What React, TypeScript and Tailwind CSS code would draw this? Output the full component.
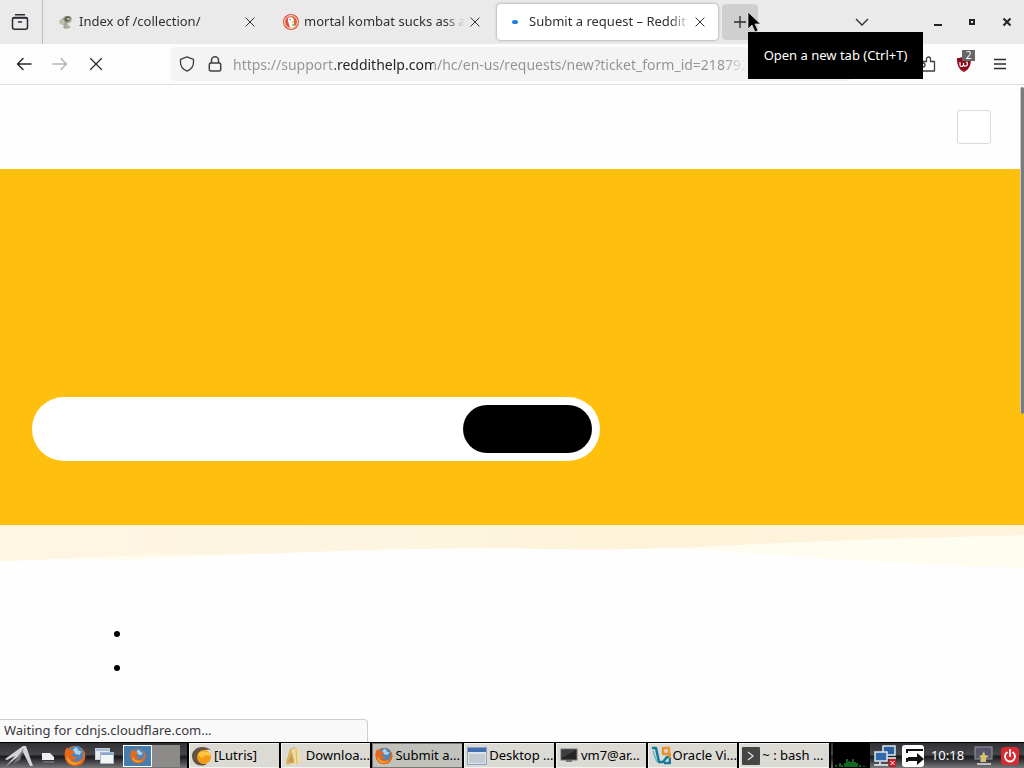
import type { ReactNode } from "react";

function Cross({ size = 16, className = "" }: { size?: number; className?: string }) {
  return (
    <svg width={size} height={size} viewBox="0 0 16 16" fill="none" stroke="currentColor" strokeWidth="1.3" strokeLinecap="round" className={className} aria-hidden="true">
      <path d="M2.5 2.5l11 11M13.5 2.5l-11 11" />
    </svg>
  );
}

function RecentIcon() {
  return (
    <svg width="18" height="18" viewBox="0 0 18 18" fill="none" stroke="#2b2a33" strokeWidth="1.5" strokeLinecap="round" aria-hidden="true">
      <path d="M4.5 1.7h9" />
      <rect x="1.5" y="4.6" width="15" height="11.6" rx="2" />
      <path d="M2 4.9h14M7.5 9h3" />
    </svg>
  );
}

function CollectionIcon() {
  return (
    <svg width="16" height="16" viewBox="0 0 16 16" aria-hidden="true">
      <path d="M1 7l4-3 2-2h5l2 2-1 4-4 2 3 2v2l-5 1-2-2 1-2-4-1z" fill="#a5a698" />
      <path d="M6 5l3-3 3 1-1 4-3 1z" fill="#5f6356" />
      <path d="M2 7l3-1 1 3-3 1zM8 12h4" fill="#bdb49c" stroke="#c9c6ba" strokeWidth="1" />
      <circle cx="10" cy="5" r="1" fill="#d9d6c4" />
    </svg>
  );
}

function DuckIcon() {
  return (
    <svg width="16" height="16" viewBox="0 0 16 16" aria-hidden="true">
      <circle cx="8" cy="8" r="8" fill="#dc5636" />
      <circle cx="8" cy="8" r="6.4" fill="none" stroke="#fff" strokeWidth="0.9" />
      <path d="M5 4.6C5.700 2.800 9.600 2.600 10.700 5.300c.5 1.6-.2 2.500.3 4 .4 1.300 1.100 2.700.6 3.800-1.300.8-3.300 1-4.600.500-.600-2.900-2.700-6.500-2-9z" fill="#fff" />
      <path d="M8.300 7.500c1.500-.500 2.700-.300 4 .100-.900.900-2.300 1.200-3.900.900z" fill="#f5b82e" />
      <circle cx="7" cy="5.700" r=".700" fill="#35506e" />
      <path d="M9 10.500l2.500-.7v2.200L9 11.500z" fill="#62b35b" />
    </svg>
  );
}

function FirefoxIcon({ size = 20 }: { size?: number }) {
  return (
    <svg width={size} height={size} viewBox="0 0 20 20" className="shrink-0" aria-hidden="true">
      <circle cx="10" cy="10" r="9.300" fill="#dd6b18" />
      <circle cx="11" cy="8" r="7" fill="#4a85bd" />
      <path d="M10 2c2 .5 3 1.500 3 3l3 1-2 3-4-1-2-3z" fill="#a9d3ea" />
      <path d="M1 5l2-3 2 3c2-1 4 0 5 2L7 8.500c0 2 2 3 5 2-1 3-4 4-6 2 2 4 9 4 11-1 1-3 0-6-1-8 3 2 4 6 3 9-2 6-8 8-13 5C1 15 0 10 1 5z" fill="#e8681a" />
      <path d="M3 10c2 6 8 8 13 4-3 5-9 5-12 1-1-1-1-3-1-5z" fill="#f7a531" />
    </svg>
  );
}

function WindowsIcon() {
  return (
    <svg width="22" height="20" viewBox="0 0 22 20" aria-hidden="true">
      <rect x="1.500" y="2.500" width="14" height="11" fill="#e8eaee" stroke="#c5ccda" />
      <path d="M2 3h13v2H2z" fill="#a8bdde" />
      <rect x="6.500" y="6.500" width="13" height="11" fill="#f4f5f7" stroke="#a9b4cd" />
      <path d="M7 7h12v2H7z" fill="#8ba5d1" />
    </svg>
  );
}

function Tab({ icon, title, active = false, className }: { icon: ReactNode; title: string; active?: boolean; className: string }) {
  return (
    <div
      role="tab"
      aria-selected={active}
      className={`flex h-9 items-center rounded pr-2 pl-[11px] ${active ? "bg-white shadow-[0_0_3px_rgba(0,0,0,0.4)]" : ""} ${className}`}
    >
      <span className="flex w-4 shrink-0 justify-center">{icon}</span>
      <span className="ml-[5px] min-w-0 flex-1 overflow-hidden text-[13px] whitespace-nowrap text-[#2f2f35] [mask-image:linear-gradient(to_left,transparent,black_20px)]">{title}</span>
      <button aria-label={`Close ${title}`} className="flex size-5 shrink-0 items-center justify-center text-[#2b2a33]">
        <Cross size={12} />
      </button>
    </div>
  );
}

function TabBar() {
  return (
    <div className="flex h-11 shrink-0 items-center bg-[#eaeaea]">
      <button aria-label="Recent browsing" className="flex h-11 w-[43px] shrink-0 items-center justify-center border-r border-[#bdbdbd] pr-0.5">
        <RecentIcon />
      </button>
      <div role="tablist" className="ml-1 flex min-w-0 gap-1">
        <Tab className="w-[221px]" icon={<CollectionIcon />} title="Index of /collection/" />
        <Tab className="w-[221px]" icon={<DuckIcon />} title="mortal kombat sucks ass a" />
        <Tab
          active
          className="w-[221px]"
          icon={<svg width="16" height="16" aria-hidden="true"><ellipse cx="7" cy="8" rx="3" ry="2" fill="#1a7be0" /></svg>}
          title="Submit a request – Reddit"
        />
      </div>
      <div className="relative ml-1 shrink-0">
        <button aria-label="Open a new tab" className="flex h-9 w-9 items-center justify-center rounded bg-[#cfcfcf]">
          <svg width="14" height="14" viewBox="0 0 14 14" stroke="#2b2a33" strokeWidth="1.3" aria-hidden="true"><path d="M7 1v12M1 7h12" /></svg>
        </button>
        <div role="tooltip" className="absolute top-7 left-[26px] z-20 flex h-[47px] w-[175px] items-center justify-center bg-black text-[13px] whitespace-nowrap text-white">
          Open a new tab (Ctrl+T)
        </div>
        <svg width="14" height="22" viewBox="0 0 14 22" className="absolute top-[7px] left-[25px] z-30" aria-hidden="true">
          <path d="M1 1v17l4-4 3 7 3-1.500-3-6.500h5.500z" fill="#000" stroke="#eee" strokeWidth="0.7" />
        </svg>
      </div>
      <div className="flex-1" />
      <button aria-label="List all tabs" className="mr-16 flex size-4 items-center justify-center">
        <svg width="14" height="8" viewBox="0 0 14 8" fill="none" stroke="#2b2a33" strokeWidth="1.300" aria-hidden="true"><path d="M1 1l6 6 6-6" /></svg>
      </button>
      <div className="flex shrink-0 gap-[26px] pr-3">
        <button aria-label="Minimize"><svg width="8" height="10" aria-hidden="true"><path d="M0 8h8" stroke="#222" strokeWidth="2" /></svg></button>
        <button aria-label="Maximize"><svg width="8" height="10" aria-hidden="true"><rect x="2" y="3" width="4" height="4" fill="none" stroke="#222" strokeWidth="2" /></svg></button>
        <button aria-label="Close window"><svg width="10" height="10" aria-hidden="true"><path d="M1.500 1.500l7 7M8.500 1.500l-7 7" stroke="#222" strokeWidth="2" /></svg></button>
      </div>
    </div>
  );
}

function Toolbar() {
  return (
    <div className="flex h-[41px] shrink-0 items-center border-b border-[#e0e0e0] bg-[#fdfdfd] pr-4 pl-4">
      <button aria-label="Back" className="flex size-4 items-center justify-center">
        <svg width="16" height="16" viewBox="0 0 16 16" fill="none" stroke="#2b2a33" strokeWidth="1.5" strokeLinecap="round" strokeLinejoin="round" aria-hidden="true"><path d="M7 2.500L1.500 8 7 13.500M2 8h13" /></svg>
      </button>
      <button aria-label="Forward" className="ml-5 flex size-4 items-center justify-center">
        <svg width="16" height="16" viewBox="0 0 16 16" fill="none" stroke="#b4b4b6" strokeWidth="1.5" strokeLinecap="round" strokeLinejoin="round" aria-hidden="true"><path d="M9 2.500L14.500 8 9 13.500M14 8H1" /></svg>
      </button>
      <button aria-label="Stop" className="ml-5 flex size-4 items-center justify-center text-[#2b2a33]"><Cross /></button>
      <div className="ml-[67px] flex h-[34px] min-w-0 flex-1 items-center rounded bg-[#f4f4f4] pl-2">
        <svg width="16" height="16" viewBox="0 0 16 16" fill="none" stroke="#3f3f46" strokeWidth="1.300" strokeLinejoin="round" className="shrink-0" aria-hidden="true">
          <path d="M8 .900l6.500 2.400v3.200c0 4-2.500 7-6.500 8.700-4-1.700-6.500-4.700-6.500-8.700V3.300z" />
        </svg>
        <svg width="16" height="16" viewBox="0 0 16 16" fill="none" stroke="#3f3f46" strokeWidth="1.5" className="ml-3 shrink-0" aria-hidden="true">
          <rect x="2.300" y="7" width="11.400" height="8" rx="1.500" /><path d="M4.500 7V4a3.500 3.200 0 017 0v3" />
        </svg>
        <input
          aria-label="Address"
          readOnly
          value="https://support.reddithelp.com/hc/en-us/requests/new?ticket_form_id=2187929"
          className="ml-2.5 w-[514px] min-w-0 bg-[linear-gradient(to_right,#929294_102px,#202024_102px,#202024_201px,#929294_201px,#929294_490px,transparent_514px)] bg-clip-text text-[14px] text-transparent outline-none"
        />
      </div>
      <button aria-label="Extensions" className="ml-[68px] flex size-4 items-center justify-center">
        <svg width="16" height="16" viewBox="0 0 16 16" fill="none" stroke="#3f3f46" strokeWidth="1.300" strokeLinejoin="round" aria-hidden="true">
          <path d="M1.500 5.500h5V3a2 2 0 014 0v2.500h4v9.500h-13v-4H3a2 2 0 000-4H1.500z" />
        </svg>
      </button>
      <button aria-label="Content blocker, 2 blocked" className="relative ml-5 size-4">
        <svg width="16" height="16" viewBox="0 0 16 16" aria-hidden="true">
          <path d="M8 0c2 1.500 4 2 7 2 0 6-1 11-7 14C2 13 1 8 1 2c3 0 5-.500 7-2z" fill="#8f0b1c" />
          <path d="M4 6v3c0 2 3 2 3.500 0V7v2c1 2 4 1 4-1s-1-2-1.500-2" fill="none" stroke="#fff" strokeWidth="1.200" />
        </svg>
        <span className="absolute -top-1.5 left-1.5 h-[11px] w-[13px] bg-[#666] text-center text-[10px] leading-[11px] text-white">2</span>
      </button>
      <button aria-label="Menu" className="ml-5 flex size-4 items-center justify-center">
        <svg width="14" height="12" viewBox="0 0 14 12" stroke="#2b2a33" strokeWidth="1.300" aria-hidden="true"><path d="M1 1.500h12M1 6h12M1 10.500h12" /></svg>
      </button>
    </div>
  );
}

function Page() {
  return (
    <main className="relative min-h-0 flex-1 overflow-hidden bg-[#fefefe]">
      <header className="flex h-[84px] items-center justify-end pr-[33px]">
        <button aria-label="Toggle navigation menu" className="size-[34px] rounded-[3px] border border-[#dadada] bg-white" />
      </header>
      <section className="flex h-[356px] flex-col justify-end bg-[#ffc00d] px-8 pb-16">
        <form className="flex h-16 w-full max-w-[568px] rounded-full bg-white p-2">
          <input type="search" aria-label="Search" className="min-w-0 flex-1 rounded-full pl-6 outline-none" />
          <button type="button" aria-label="Submit search" className="w-[129px] rounded-full bg-black" />
        </form>
      </section>
      <svg viewBox="0 0 1024 48" preserveAspectRatio="none" className="block h-12 w-full" aria-hidden="true">
        <defs>
          <linearGradient id="wave">
            <stop offset="0" stopColor="#fff5e3" />
            <stop offset="0.4" stopColor="#fef5e0" />
            <stop offset="0.6" stopColor="#fdf3d9" />
            <stop offset="1" stopColor="#fff3dc" />
          </linearGradient>
        </defs>
        <path d="M0 0h1024v43Q930 40 850 35T700 25T512 20T250 29T60 34L0 36z" fill="#fffcf0" />
        <path d="M0 0h1024v10Q850 14 740 20Q610 27 512 23Q390 23 260 29Q120 30 60 34L0 36z" fill="url(#wave)" />
      </svg>
      <ul className="mt-[43px] list-disc pl-[132px] text-[16px] leading-[34px] text-black">
        <li className="h-[34px]" />
        <li className="h-[34px]" />
      </ul>
      <div className="absolute top-0.5 right-0 h-[327px] w-1 rounded-sm border-l border-[#c8c8c8] bg-[#7b7b7f]" />
      <div role="status" className="absolute bottom-0 left-0 flex h-[23px] w-[368px] items-center rounded-tr-sm border-t border-r border-[#cfcfcf] bg-[#f9f9fa] pl-1 text-[13px] text-[#38383d]">
        Waiting for cdnjs.cloudflare.com...
      </div>
    </main>
  );
}

function LutrisIcon() {
  return (
    <svg width="20" height="20" viewBox="0 0 20 20" className="shrink-0" aria-hidden="true">
      <path d="M19 4C12-2 0 1 0 10c0 8 8 12 15 8-7 0-10-4-9-8 1-5 7-7 13-6z" fill="#635443" />
      <circle cx="12" cy="11" r="7" fill="#f59a13" />
      <path d="M6 9c2-5 9-4 12-2v3c-4-2-6 0-8 2z" fill="#ffc342" />
    </svg>
  );
}

function FolderIcon() {
  return (
    <svg width="20" height="20" viewBox="0 0 20 20" className="shrink-0" aria-hidden="true">
      <path d="M2 16L6 3l5-2v16l-8 2z" fill="#dcb45f" />
      <path d="M8 3h8l1 15H7z" fill="#f0dda3" />
      <path d="M4 16l4-9 2 10zM12 3l1 15" fill="#c89c4d" stroke="#cba965" strokeWidth=".700" />
    </svg>
  );
}

function DesktopIcon() {
  return (
    <svg width="20" height="20" viewBox="0 0 20 20" className="shrink-0" aria-hidden="true">
      <rect x=".500" y="1.500" width="19" height="17" fill="#dfe3e8" stroke="#8ca1c4" />
      <path d="M1 2h18v4H1z" fill="#426fae" />
      <path d="M2 8h16v9H2z" fill="#c2cad4" />
    </svg>
  );
}

function MonitorIcon() {
  return (
    <svg width="20" height="20" viewBox="0 0 20 20" className="shrink-0" aria-hidden="true">
      <rect x="2" y="3" width="16" height="11" fill="#242424" stroke="#777" />
      <path d="M3 4h14L3 12z" fill="#3d3d3d" />
      <path d="M7 14h6v2H7z" fill="#777" />
    </svg>
  );
}

function VirtualBoxIcon() {
  return (
    <svg width="20" height="20" viewBox="0 0 20 20" fill="none" strokeWidth="2.500" strokeLinejoin="round" className="shrink-0" aria-hidden="true">
      <path d="M1 2h4l3 14h4l4-5h3v6h-6" stroke="#147b98" />
      <path d="M2 5l4 11" stroke="#63b7c7" strokeWidth="1.500" />
      <path d="M18 7V2h-6v6h7v4" stroke="#e6942b" />
    </svg>
  );
}

function TerminalIcon() {
  return (
    <svg width="18" height="18" viewBox="0 0 18 18" className="shrink-0" aria-hidden="true">
      <rect width="18" height="18" rx="1" fill="#454545" />
      <path d="M6 5l5 4-5 4" fill="none" stroke="#ddd" strokeWidth="1.300" />
    </svg>
  );
}

const tasks: { label: string; icon: ReactNode; active?: boolean }[] = [
  { label: "[Lutris]", icon: <LutrisIcon /> },
  { label: "Downloa...", icon: <FolderIcon /> },
  { label: "Submit a...", icon: <FirefoxIcon size={18} />, active: true },
  { label: "Desktop ...", icon: <DesktopIcon /> },
  { label: "vm7@ar...", icon: <MonitorIcon /> },
  { label: "Oracle Vi...", icon: <VirtualBoxIcon /> },
  { label: "~ : bash ...", icon: <TerminalIcon /> },
];

function Taskbar() {
  return (
    <nav aria-label="Taskbar" className="flex h-[26px] shrink-0 items-stretch border-t border-black bg-[linear-gradient(#303035,#45454a_45%,#19191c_55%,#77777a)]">
      <div className="flex w-[187px] shrink-0 items-center pl-1">
        <button aria-label="Applications menu">
          <svg width="30" height="24" viewBox="0 0 30 24" aria-hidden="true">
            <path d="M1 15L19 2h3l7 20h-3L19 8l-4 4-13 10 9-10L3 16z" fill="#d1d3d4" />
            <path d="M12 15l8-11-4 12-7 4z" fill="#727577" />
          </svg>
        </button>
        <button aria-label="File manager" className="ml-[7px]">
          <svg width="14" height="20" viewBox="0 0 14 20" aria-hidden="true"><path d="M1 7h8l4 4v3H1z" fill="#eee" /><path d="M2 15h11v2H2z" fill="#66686b" /></svg>
        </button>
        <button aria-label="Firefox" className="ml-[9px]"><FirefoxIcon size={22} /></button>
        <button aria-label="Show windows" className="ml-2"><WindowsIcon /></button>
        <button aria-label="Desktop 1" className="ml-[7px] flex h-[22px] w-[29px] shrink-0 items-center justify-center border border-white bg-[#477eaf]"><FirefoxIcon size={16} /></button>
        <button aria-label="Desktop 2" className="h-[22px] w-7 shrink-0 bg-[#8d8b87]" />
      </div>
      <div className="flex min-w-0 flex-1 gap-0.5 bg-black px-0.5">
        {tasks.map((task) => (
          <button
            key={task.label}
            className={`flex min-w-0 flex-1 items-center gap-0.5 overflow-hidden border-t border-b border-l pl-0.5 text-[13px] whitespace-nowrap text-black ${task.active ? "border-[#77776f] bg-[#c2c2bc]" : "border-[#f2f2ee] bg-[#dcdad5]"}`}
          >
            {task.icon}
            <span>{task.label}</span>
          </button>
        ))}
      </div>
      <div className="flex w-[193px] shrink-0 items-center">
        <svg width="40" height="25" viewBox="0 0 40 25" className="ml-0.5" aria-label="CPU usage">
          <path d="M0 0h37v25H0z" fill="#000" />
          <path d="M3 24v-2M7 24v-4M9 24v-2M12 24v-4M14 24v-8M16 24v-6M18 24v-5M20 24v-8M22 24v-5M24 24v-4M27 24v-2M31 24v-1" stroke="#168b2a" strokeWidth="1.500" />
        </svg>
        <svg width="24" height="24" viewBox="0 0 24 24" aria-label="Network status">
          <rect x="10" y="2" width="12" height="9" fill="#2d60a0" stroke="#dce7ef" strokeWidth="1.500" />
          <path d="M13 14h10" stroke="#b6c4ca" strokeWidth="2" />
          <rect x="2" y="8" width="12" height="9" fill="#3269a9" stroke="#dce7ef" strokeWidth="1.500" />
          <path d="M7 18v2M1 21h14" stroke="#c8d2d6" strokeWidth="2" />
          <path d="M16 15h7v8h-7z" fill="#c61c26" /><path d="M17.500 17l4 4M21.500 17l-4 4" stroke="#fff" />
        </svg>
        <svg width="24" height="24" viewBox="0 0 24 24" className="ml-1" aria-label="Session">
          <rect x="1" y="1" width="22" height="22" rx="3" fill="#fff" />
          <path d="M22 6H6v3M6 14v4" fill="none" stroke="#111" strokeWidth="2" />
          <path d="M7 13h9V9l7 6-7 6v-4H7z" fill="#111" />
        </svg>
        <time className="ml-1 w-[37px] text-center text-[13px] text-white">10:18</time>
        <svg width="22" height="22" viewBox="0 0 22 22" className="ml-[7px]" aria-label="Display">
          <rect x="2" y="2" width="17" height="12" fill="#56556b" stroke="#999aa6" />
          <path d="M8 14h5v3H8zM4 18h14v2H4z" fill="#c0bfbd" />
          <path d="M11 6l1 4 4 1-3 2v4l-3-1-3 1 1-4-2-2 3-1z" fill="#d7c36d" />
        </svg>
        <button aria-label="Shut down" className="ml-1.5 flex size-[18px] items-center justify-center rounded-sm bg-[#d72b32]">
          <svg width="14" height="14" viewBox="0 0 14 14" fill="none" stroke="#fff" strokeWidth="1.800" strokeLinecap="round" aria-hidden="true"><path d="M4 3.500a5 5 0 106 0M7 1v6" /></svg>
        </button>
      </div>
    </nav>
  );
}

export default function App() {
  return (
    <div className="flex h-screen flex-col overflow-hidden font-['Noto_Sans',sans-serif]">
      <TabBar />
      <Toolbar />
      <Page />
      <Taskbar />
    </div>
  );
}
